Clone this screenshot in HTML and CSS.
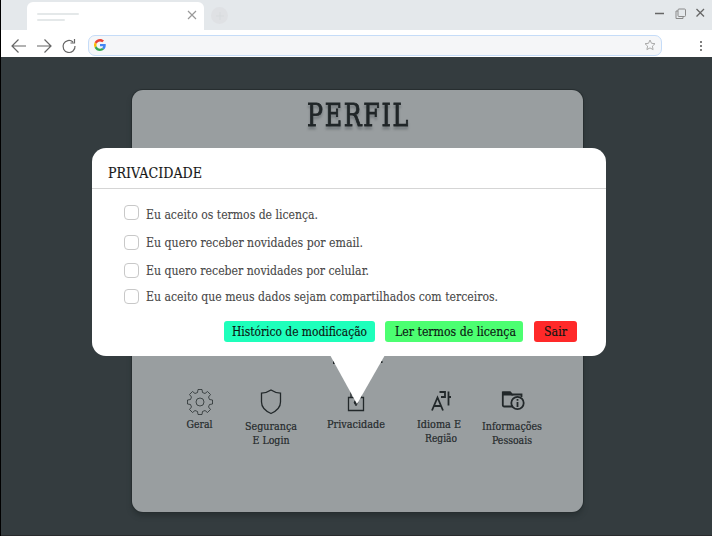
FILE: index.html
```html
<!DOCTYPE html>
<html lang="pt-BR">
<head>
<meta charset="utf-8">
<title>Perfil</title>
<link rel="stylesheet" href="styles.css">
</head>
<body>
<div class="browser">
  <header class="tabs">
    <div class="tab">
      <div class="lines"><i></i><i class="short"></i></div>
      <svg class="close" width="10" height="10" viewBox="0 0 10 10"><path d="M1 1l8 8M9 1l-8 8"/></svg>
    </div>
    <div class="newtab"><svg width="10" height="10" viewBox="0 0 10 10"><path d="M5 1v8M1 5h8"/></svg></div>
    <svg class="controls" width="54" height="14" viewBox="0 0 54 14">
      <path class="dark" d="M1 7.500h9M42.500 3l7.500 7.500M50 3l-7.500 7.500"/>
      <rect x="24" y="3" width="7.500" height="7.500" rx="1"/><path d="M24 5h-2v7.500h7V10.500"/>
    </svg>
  </header>
  <div class="toolbar">
    <svg class="nav" width="68" height="18" viewBox="0 0 68 18">
      <path d="M15 9H1M7.500 2.500L1 9L7.500 15.500M26 9h14M33.500 2.500L40 9L33.500 15.500"/>
      <path d="M62 5A6 6 0 1 0 64 9M63.500 2v4h-4"/>
    </svg>
    <div class="address">
      <svg width="12" height="12" viewBox="0 0 48 48">
        <path fill="#ea4335" d="M24 9.500c3.500 0 6.700 1.200 9.200 3.600l6.900-6.900C35.900 2.400 30.500 0 24 0 14.600 0 6.500 5.400 2.600 13.200l8 6.200C12.400 13.700 17.700 9.500 24 9.500z"/>
        <path fill="#4285f4" d="M47 24.500c0-1.600-.2-3.100-.4-4.500H24v9h12.900c-.6 3-2.300 5.500-4.800 7.200l7.700 6C44.400 38 47 31.900 47 24.500z"/>
        <path fill="#fbbc05" d="M10.500 28.600a14.500 14.500 0 0 1 0-9.200l-8-6.200a24 24 0 0 0 0 21.600z"/>
        <path fill="#34a853" d="M24 48c6.500 0 11.900-2.100 15.900-5.800l-7.700-6c-2.200 1.500-4.900 2.300-8.200 2.300-6.300 0-11.600-4.200-13.500-9.900l-8 6.200C6.500 42.600 14.600 48 24 48z"/>
      </svg>
      <svg class="star" width="12" height="12" viewBox="0 0 12 12"><path d="M6 1l1.500 3.300 3.500.4-2.600 2.400.7 3.500L6 8.900l-3.100 1.700.7-3.500L1 4.700l3.500-.4z"/></svg>
    </div>
    <div class="dots"><i></i><i></i><i></i></div>
  </div>
  <main class="page">
    <section class="profile">
      <h1><svg width="110" height="42"><text x="4" y="33" textLength="103" lengthAdjust="spacingAndGlyphs">PERFIL</text></svg></h1>
      <nav class="options">
        <div class="option">
          <svg width="28" height="28" viewBox="-14 -14 28 28"><path d="M-2.500-9.500L-2-12.500H2L2.500-9.500L5-8.500L7.500-10.500L10.500-7.500L8.500-5L9.500-2.500L12.500-2V2L9.500 2.500L8.500 5L10.500 7.500L7.500 10.500L5 8.500L2.500 9.500L2 12.500H-2L-2.500 9.500L-5 8.500L-7.500 10.500L-10.500 7.500L-8.500 5L-9.500 2.500L-12.500 2V-2L-9.500-2.500L-8.500-5L-10.500-7.500L-7.500-10.500L-5-8.500Z"/><circle r="4"/></svg>
          <svg class="caption" width="60" height="32"><text x="29.500" y="11" textLength="26" lengthAdjust="spacingAndGlyphs">Geral</text></svg>
        </div>
        <div class="option">
          <svg width="28" height="28" viewBox="0 0 28 28"><path class="medium" d="M14 2C11 4 8 5 4.500 5.200V14C4.500 20 8.500 23 14 25.500C19.500 23 23.500 20 23.500 14V5.200C20 5 17 4 14 2Z"/></svg>
          <svg class="caption low" width="60" height="32"><text x="30" y="11" textLength="52" lengthAdjust="spacingAndGlyphs">Segurança</text><text x="30" y="25" textLength="37" lengthAdjust="spacingAndGlyphs">E Login</text></svg>
        </div>
        <div class="option">
          <svg width="28" height="28" viewBox="0 0 28 28"><path class="medium" d="M6.500 9.500h15v13h-15zM9 9V5a5 5 0 0 1 10 0v4"/><path class="medium" d="M14 14v4"/><circle class="solid" cx="14" cy="14.500" r="2.200"/></svg>
          <svg class="caption" width="60" height="32"><text x="30" y="11" textLength="58" lengthAdjust="spacingAndGlyphs">Privacidade</text></svg>
        </div>
        <div class="option">
          <svg width="28" height="28" viewBox="0 0 28 28"><path class="heavy" d="M5 22.500L10.500 9.500L16 22.500M7 18h7M12.500 4h5.500v5h-4M21.500 3.500v14M21.500 9h2.500"/></svg>
          <svg class="caption" width="60" height="32"><text x="28" y="11" textLength="44" lengthAdjust="spacingAndGlyphs">Idioma E</text><text x="30" y="25" textLength="32" lengthAdjust="spacingAndGlyphs">Região</text></svg>
        </div>
        <div class="option">
          <svg width="28" height="28" viewBox="0 0 28 28"><path class="heavy" d="M15 18.500H6.300Q4.800 18.500 4.800 17V4.500H12L14 6.500H23.500V9"/><path class="solid" d="M4.500 3.500h8l3 4h-11z"/><circle class="heavy" cx="19.500" cy="15" r="6.200"/><path class="heavy" d="M19.500 14v5M19.500 11v1.800"/></svg>
          <svg class="caption low" width="62" height="32"><text x="31" y="11" textLength="60" lengthAdjust="spacingAndGlyphs">Informações</text><text x="31" y="25" textLength="40" lengthAdjust="spacingAndGlyphs">Pessoais</text></svg>
        </div>
      </nav>
    </section>
    <section class="dialog">
      <h2><svg width="120" height="24"><text x="0" y="18" textLength="94" lengthAdjust="spacingAndGlyphs">PRIVACIDADE</text></svg></h2>
      <div class="checks">
        <label><i></i><svg width="380" height="20"><text y="13.500" textLength="172" lengthAdjust="spacingAndGlyphs">Eu aceito os termos de licença.</text></svg></label>
        <label><i></i><svg width="380" height="20"><text y="11.500" textLength="217" lengthAdjust="spacingAndGlyphs">Eu quero receber novidades por email.</text></svg></label>
        <label><i></i><svg width="380" height="20"><text y="11.500" textLength="223" lengthAdjust="spacingAndGlyphs">Eu quero receber novidades por celular.</text></svg></label>
        <label><i></i><svg width="380" height="20"><text y="11.500" textLength="352" lengthAdjust="spacingAndGlyphs">Eu aceito que meus dados sejam compartilhados com terceiros.</text></svg></label>
      </div>
      <div class="actions">
        <button class="history"><svg width="136" height="21"><text y="15" textLength="135" lengthAdjust="spacingAndGlyphs">Histórico de modificação</text></svg></button>
        <button class="terms"><svg width="122" height="21"><text y="15" textLength="121" lengthAdjust="spacingAndGlyphs">Ler termos de licença</text></svg></button>
        <button class="exit"><svg width="24" height="21"><text y="15" textLength="23" lengthAdjust="spacingAndGlyphs">Sair</text></svg></button>
      </div>
      <svg class="pointer" width="56" height="49" viewBox="0 0 56 49"><path class="trace" d="M3 6h2v3h-2zM51 6h1.500v2h-1.500z"/><path d="M0 0H55L27 49Z"/></svg>
    </section>
  </main>
</div>
</body>
</html>
```
FILE: styles.css
```css
* { box-sizing: border-box; }
body { margin: 0; background: #000; font-family: "DejaVu Serif Condensed", "DejaVu Serif", serif; font-stretch: condensed; }
svg { display: block; flex: none; overflow: visible; }
h1, h2 { margin: 0; font-weight: 400; }
.browser { height: 536px; padding-left: 1px; overflow: hidden; }

.tabs { height: 30px; display: flex; background: #e4e8eb; }
.tab { width: 177px; height: 28px; margin: 2px 0 0 26px; padding: 10px 7px 0 10px; display: flex; justify-content: space-between; background: #fff; border-radius: 6px 6px 0 0; }
.lines i { display: block; width: 42px; height: 2px; margin-top: 1px; background: #e4e8e9; border-radius: 1px; }
.lines .short { width: 28px; margin-top: 4px; }
.close { stroke: #999; stroke-width: 1.2; margin-top: -2px; }
.newtab { width: 17px; height: 17px; margin: 7px 0 0 7px; display: grid; place-items: center; border-radius: 50%; background: #dfe1e4; }
.newtab svg { stroke: #d7dbdd; }
.controls { margin: 6px 4px 0 auto; fill: none; stroke: #8a8a8a; stroke-width: 1; }
.controls .dark { stroke: #666; stroke-width: 1.3; }

.toolbar { height: 27px; display: flex; align-items: center; background: #fff; }
.nav { margin: 5px 9px 0 10px; width: 68px; fill: none; stroke: #666; stroke-width: 1.2; }
.address { width: 574px; height: 21px; margin-top: 4px; padding: 0 5px 1px; display: flex; align-items: center; justify-content: space-between; border: 1px solid #c5dcf8; border-radius: 7px; background: #f5f6f8; }
.star { fill: none; stroke: #aaa; stroke-width: 1; }
.dots { display: grid; gap: 2px; margin: 4px 10px 0 auto; }
.dots i { width: 2px; height: 2px; background: #555; border-radius: 1px; }

.page { position: relative; height: 479px; padding-top: 33px; background: #343c3f; border-bottom: 1px solid #292b2d; }
.profile { width: 451px; height: 422px; margin-left: 131px; background: #999ea0; border-radius: 11px; box-shadow: 0 0 0 1px #272e30, 0 4px 5px #293133; display: flex; flex-direction: column; justify-content: space-between; align-items: center; }
h1 { margin-top: 3px; }
h1 svg { font-size: 31px; letter-spacing: 2px; fill: #202628; stroke: #202628; stroke-width: .8; filter: drop-shadow(0 3px 1px #767c7f); }
.options { width: 451px; height: 124px; display: grid; grid-template-columns: 74px 68px 102px 67px 76px; padding-left: 31px; }
.option { display: flex; flex-direction: column; align-items: center; fill: none; stroke: #22282a; stroke-width: .75; }
.caption { margin-top: 1px; fill: #24292b; stroke: #24292b; stroke-width: .2; font-size: 11.8px; text-anchor: middle; }
.caption.low { margin-top: 3px; }
.medium { stroke-width: 1.3; }
.heavy { stroke-width: 1.8; }
.solid { fill: #22282a; stroke: none; }

.dialog { position: absolute; top: 91px; left: 91px; width: 514px; height: 208px; background: #fff; border-radius: 14px; }
h2 { height: 41px; padding: 12px 16px 0; border-bottom: 1px solid #d5d5d5; }
h2 svg { font-size: 15px; fill: #171717; stroke: #171717; stroke-width: .15; }
.checks { display: grid; grid-template-rows: 30px 28px 26px 20px; padding: 16px 0 0 32px; }
.checks label { display: flex; gap: 7px; }
.checks i { width: 14.5px; height: 14.5px; border: 1px solid #c8c8c8; border-radius: 4px; }
.checks svg { font-size: 13px; fill: #484848; stroke: #484848; stroke-width: .1; }
.actions { display: flex; justify-content: flex-end; padding: 12px 29px 0 0; }
button { height: 21px; padding: 0; border: 0; border-radius: 3px; font: 13px "DejaVu Serif Condensed", "DejaVu Serif", serif; fill: #0b1712; display: flex; }
button text { stroke: #0b1712; stroke-width: .15; }
.history { width: 151px; padding-left: 8px; margin-right: 10px; background: #1effbb; }
.terms { width: 138px; padding-left: 10px; margin-right: 11px; background: #4cff71; }
.exit { width: 43px; padding-left: 10px; background: #ff2929; }
.pointer { position: absolute; left: 238px; top: 207px; fill: #fff; }
.trace { fill: #202628; }
```
